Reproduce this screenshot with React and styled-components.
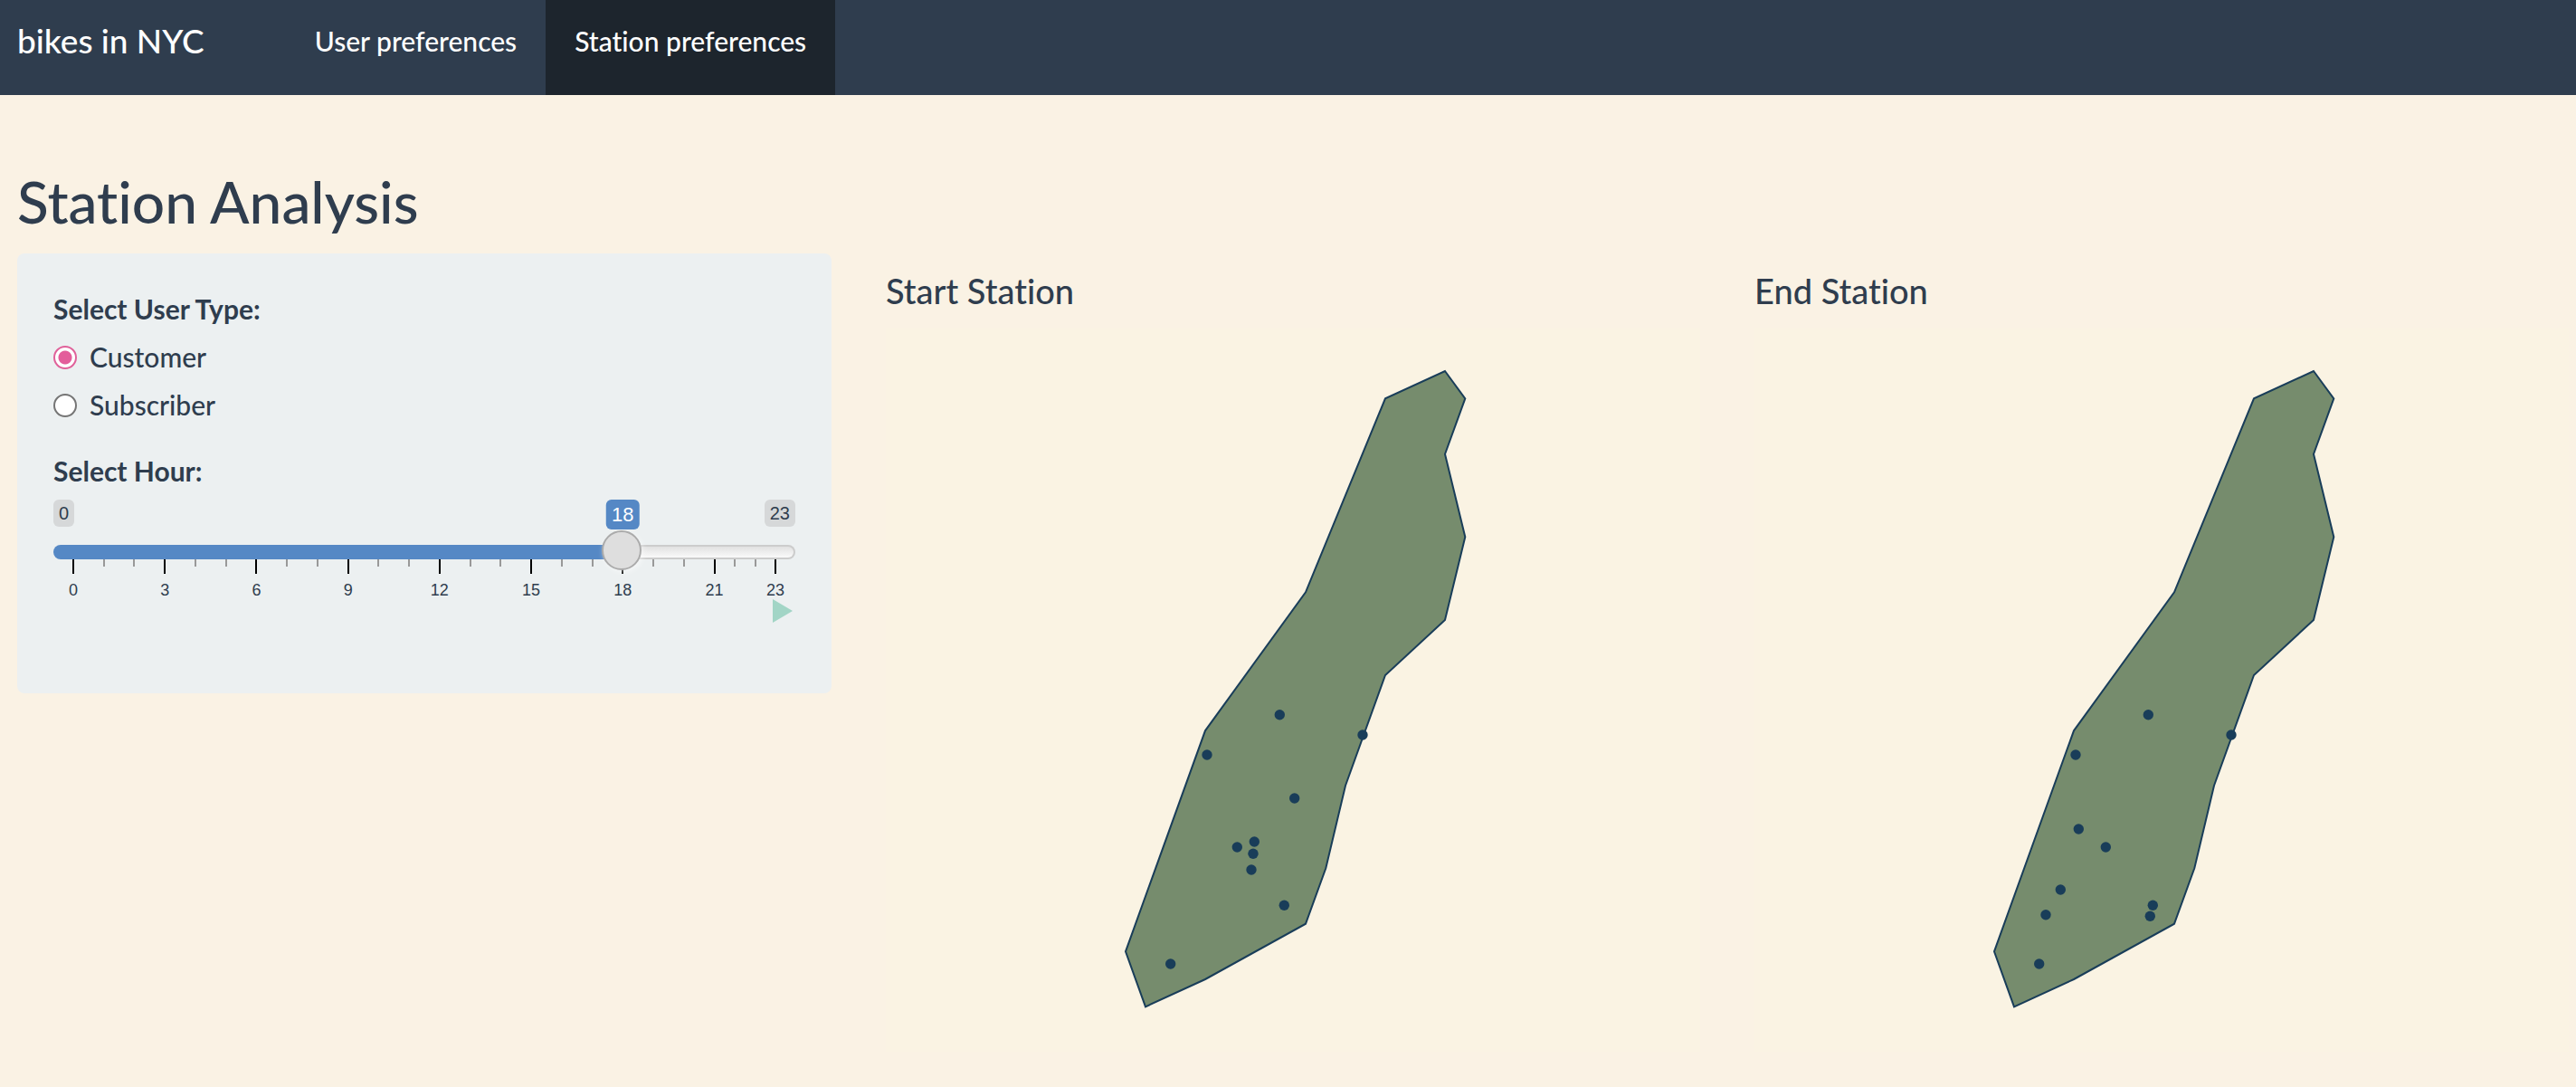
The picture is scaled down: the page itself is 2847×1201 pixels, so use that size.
import React, { useState } from "react";
import styled, { createGlobalStyle } from "styled-components";

const GlobalStyle = createGlobalStyle`
  *, *::before, *::after { box-sizing: border-box; }
  body {
    margin: 0;
    background: #faf2e4;
    color: #2f3d4e;
    font-family: Lato, "Open Sans", sans-serif;
    font-size: 30px;
    font-weight: 500;
    font-variant-ligatures: none;
    line-height: 43px;
  }
`;

const Navbar = styled.nav`
  display: flex;
  align-items: stretch;
  padding-left: 19px;
  background: #2f3d4e;
`;

const Brand = styled.a`
  padding: 23px 90px 38px 0;
  color: #fff;
  font-size: 37px;
  text-decoration: none;
`;

const Tabs = styled.ul`
  display: flex;
  margin: 0;
  padding: 0;
  list-style: none;
`;

const TabLink = styled.a`
  display: block;
  height: 100%;
  padding: 24px 32px 38px;
  background: ${(p) => (p.$active ? "#1d252d" : "transparent")};
  color: #fff;
  text-decoration: none;
`;

const Page = styled.main`
  padding: 83px 8px 20px 19px;
`;

const Title = styled.h2`
  margin: 0 0 22px;
  font-size: 64px;
  font-weight: 500;
  line-height: 70px;
`;

const Columns = styled.div`
  display: grid;
  grid-template-columns: repeat(3, minmax(0, 1fr));
  gap: 60px;
  align-items: start;
`;

const Panel = styled.form`
  padding: 40px 40px 78px;
  border-radius: 8px;
  background: #ecf0f1;
`;

const RadioSet = styled.fieldset`
  display: flex;
  flex-direction: column;
  gap: 10px;
  margin: 0 0 30px;
  padding: 0;
  border: 0;
`;

const Legend = styled.legend`
  margin-bottom: 10px;
  padding: 0;
  font-weight: 700;
`;

const RadioLabel = styled.label`
  display: flex;
  align-items: center;
  gap: 14px;
`;

const Radio = styled.input`
  appearance: none;
  width: 26px;
  height: 26px;
  margin: 0;
  border: 2px solid #757575;
  border-radius: 50%;
  background: #fff;

  &:checked {
    border-color: #e0619a;
    background: radial-gradient(circle, #e35d9b 7px, #fff 8px);
  }
`;

const HourLabel = styled.label`
  display: block;
  margin-bottom: 10px;
  font-weight: 700;
`;

const Slider = styled.div`
  font-family: "Liberation Sans", Arial, sans-serif;
  font-weight: 400;
`;

const Badges = styled.div`
  position: relative;
  display: flex;
  justify-content: space-between;
  height: 34px;
`;

const Bound = styled.span`
  height: 30px;
  padding: 0 6px;
  border-radius: 6px;
  background: #d6d8d9;
  font-size: 20px;
  line-height: 30px;
`;

const Current = styled.output`
  position: absolute;
  top: 0;
  height: 33px;
  padding: 0 6px;
  border-radius: 6px;
  background: #5588c5;
  color: #fff;
  font-size: 22px;
  line-height: 33px;
  transform: translateX(-50%);
`;

const Range = styled.input`
  appearance: none;
  display: block;
  width: 100%;
  height: 48px;
  margin: 0;
  background: transparent;

  &::-webkit-slider-runnable-track {
    height: 16px;
    border: 2px solid transparent;
    border-radius: 16px;
    background:
      linear-gradient(#5588c5, #5588c5) 0 0 / var(--fill) 100% no-repeat border-box,
      linear-gradient(#e1e1e1, #fafafa) padding-box,
      linear-gradient(#ccc, #ccc) border-box;
  }

  &::-webkit-slider-thumb {
    appearance: none;
    width: 44px;
    height: 44px;
    margin-top: -18px;
    border: 2px solid #ababab;
    border-radius: 50%;
    background: #dedede;
    box-shadow: 2px 2px 6px rgba(255, 255, 255, 0.5);
  }
`;

const Scale = styled.div`
  position: relative;
  z-index: -1;
  display: grid;
  grid-template-columns: repeat(21, 3fr) repeat(3, 2fr) 0;
  height: 44px;
  margin: -16px 22px 0;
`;

const Tick = styled.div`
  display: flex;
  flex-direction: column;
  align-items: center;
  gap: 8px;
  width: 2px;
  margin-left: -1px;
  font-size: 18px;
  line-height: 20px;

  &::before {
    content: "";
    flex: none;
    width: 2px;
    height: ${(p) => (p.$major ? "16px" : "8px")};
    background: ${(p) => (p.$major ? "#000" : "#999")};
  }
`;

const SliderBox = styled.div`
  position: relative;
  z-index: 0;
`;

const PlayRow = styled.div`
  display: flex;
  justify-content: flex-end;
`;

const PlayButton = styled.button`
  display: flex;
  padding: 0 3px 0 0;
  border: 0;
  background: transparent;
`;

const MapColumn = styled.section`
  padding-top: 20px;
`;

const MapTitle = styled.h4`
  margin: 0 0 20px;
  font-size: 38px;
  font-weight: 500;
  line-height: 42px;
`;

const MapPlot = styled.svg`
  display: block;
  width: 100%;
  height: auto;
  background: #faf3e3;
`;

const OUTLINE =
  "618,48 640.3,78.3 618,139.7 640.3,231.3 618,323 552,384 508,506 486.3,597.3 464,658.7 353,720 287,750.3 265,689.3 353,445.3 464,292.3 552,78.3";

const START = [
  [435.3, 427.7], [527, 450], [355, 472], [451.7, 520], [407.3, 568],
  [388.3, 574], [406, 581.3], [404, 599], [440.3, 638.3], [314.7, 703],
];

const END = [
  [435.3, 427.7], [527, 450], [355, 472], [358.3, 554], [388.3, 574],
  [338.3, 621], [322, 648.7], [440.3, 638.3], [437.3, 650.3], [314.7, 703],
];

const MAX = 23;
const TICKS = Array.from({ length: 25 }, (_, i) => {
  if (i === 24) return { major: true, label: 23 };
  const major = i % 3 === 0;
  return { major, label: major ? i : null };
});

function StationMap({ title, stations }) {
  return (
    <MapColumn>
      <MapTitle>{title}</MapTitle>
      <MapPlot viewBox="0 0 900 800" role="img" aria-label={title}>
        <polygon points={OUTLINE} fill="#768c6d" stroke="#193d59" strokeWidth="2" />
        {stations.map(([x, y]) => (
          <circle key={`${x}-${y}`} cx={x} cy={y} r="5.7" fill="#193d59" />
        ))}
      </MapPlot>
    </MapColumn>
  );
}

function HourSlider() {
  const [hour, setHour] = useState(18);
  const ratio = hour / MAX;
  const center = `calc(22px + (100% - 44px) * ${ratio})`;
  return (
    <>
      <HourLabel htmlFor="hour">Select Hour:</HourLabel>
      <Slider>
        <SliderBox>
          <Badges>
            <Bound>0</Bound>
            <Bound>{MAX}</Bound>
            <Current htmlFor="hour" style={{ left: center }}>{hour}</Current>
          </Badges>
          <Range
            id="hour"
            type="range"
            min="0"
            max={MAX}
            value={hour}
            onChange={(e) => setHour(Number(e.target.value))}
            style={{ "--fill": center }}
          />
          <Scale>
            {TICKS.map((t, i) => (
              <Tick key={i} $major={t.major}>{t.label}</Tick>
            ))}
          </Scale>
        </SliderBox>
        <PlayRow>
          <PlayButton type="button" aria-label="Play">
            <svg width="22" height="26" viewBox="0 0 22 26">
              <path d="M0 0L22 13L0 26Z" fill="#a2d5c6" />
            </svg>
          </PlayButton>
        </PlayRow>
      </Slider>
    </>
  );
}

export default function App() {
  const [userType, setUserType] = useState("Customer");
  return (
    <>
      <GlobalStyle />
      <Navbar>
        <Brand href="#">bikes in NYC</Brand>
        <Tabs>
          <li><TabLink href="#user">User preferences</TabLink></li>
          <li><TabLink href="#station" $active aria-current="page">Station preferences</TabLink></li>
        </Tabs>
      </Navbar>
      <Page>
        <Title>Station Analysis</Title>
        <Columns>
          <Panel>
            <RadioSet>
              <Legend>Select User Type:</Legend>
              {["Customer", "Subscriber"].map((type) => (
                <RadioLabel key={type}>
                  <Radio
                    type="radio"
                    name="user-type"
                    value={type}
                    checked={userType === type}
                    onChange={() => setUserType(type)}
                  />
                  {type}
                </RadioLabel>
              ))}
            </RadioSet>
            <HourSlider />
          </Panel>
          <StationMap title="Start Station" stations={START} />
          <StationMap title="End Station" stations={END} />
        </Columns>
      </Page>
    </>
  );
}
